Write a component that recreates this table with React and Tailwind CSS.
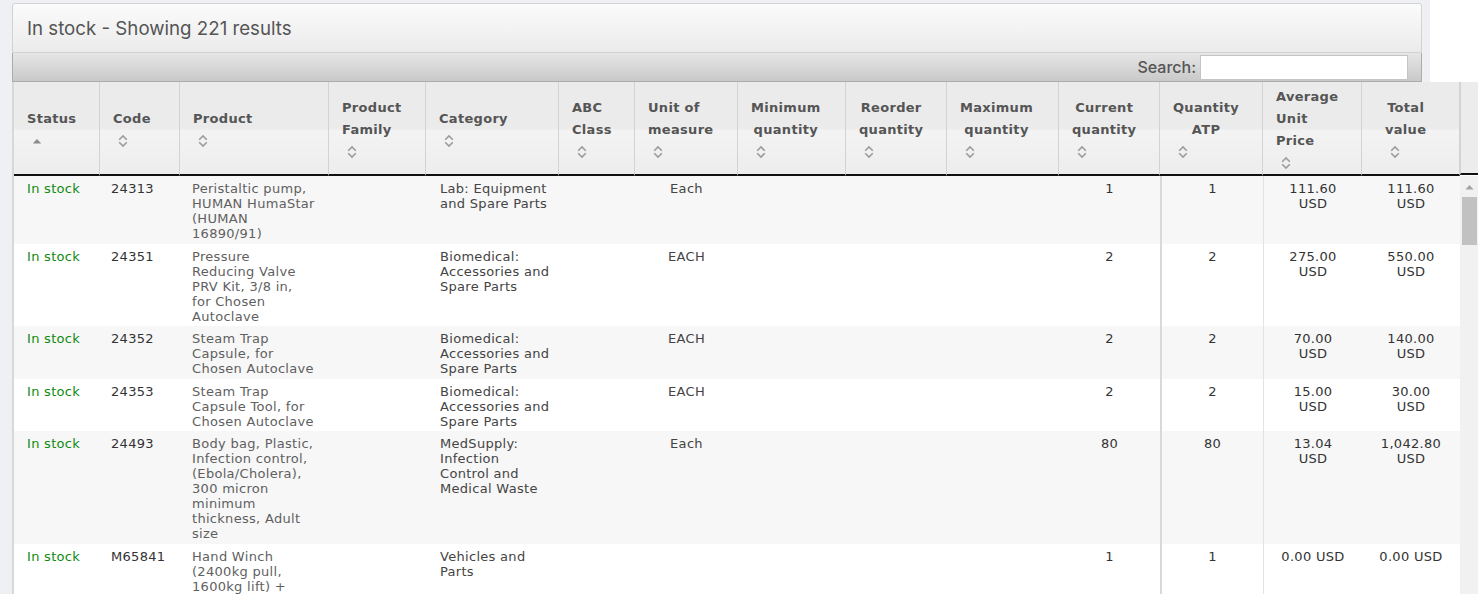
import React from "react";

const cols = [
  { key: "status", w: 86, label: ["Status"], sort: "asc" },
  { key: "code", w: 80, label: ["Code"] },
  { key: "product", w: 149, label: ["Product"] },
  { key: "family", w: 97, label: ["Product", "Family"] },
  { key: "category", w: 133, label: ["Category"] },
  { key: "abc", w: 76, label: ["ABC", "Class"] },
  { key: "uom", w: 103, label: ["Unit of", "measure"], body: "center" },
  { key: "min", w: 108, label: ["Minimum", "quantity"], head: "center" },
  { key: "reorder", w: 101, label: ["Reorder", "quantity"], head: "center" },
  { key: "max", w: 112, label: ["Maximum", "quantity"], head: "center" },
  { key: "current", w: 101, label: ["Current", "quantity"], head: "center", body: "center" },
  { key: "atp", w: 103, label: ["Quantity", "ATP"], head: "center", body: "center" },
  { key: "avg", w: 99, label: ["Average", "Unit", "Price"], body: "center" },
  { key: "total", w: 98, label: ["Total", "value"], head: "center", body: "center", pad: true },
];

const bio = ["Biomedical:", "Accessories and", "Spare Parts"];

const rows = [
  {
    code: "24313",
    product: ["Peristaltic pump,", "HUMAN HumaStar", "(HUMAN", "16890/91)"],
    category: ["Lab: Equipment", "and Spare Parts"],
    uom: "Each",
    current: "1",
    atp: "1",
    avg: ["111.60", "USD"],
    total: ["111.60", "USD"],
  },
  {
    code: "24351",
    product: ["Pressure", "Reducing Valve", "PRV Kit, 3/8 in,", "for Chosen", "Autoclave"],
    category: bio,
    uom: "EACH",
    current: "2",
    atp: "2",
    avg: ["275.00", "USD"],
    total: ["550.00", "USD"],
  },
  {
    code: "24352",
    product: ["Steam Trap", "Capsule, for", "Chosen Autoclave"],
    category: bio,
    uom: "EACH",
    current: "2",
    atp: "2",
    avg: ["70.00", "USD"],
    total: ["140.00", "USD"],
  },
  {
    code: "24353",
    product: ["Steam Trap", "Capsule Tool, for", "Chosen Autoclave"],
    category: bio,
    uom: "EACH",
    current: "2",
    atp: "2",
    avg: ["15.00", "USD"],
    total: ["30.00", "USD"],
  },
  {
    code: "24493",
    product: [
      "Body bag, Plastic,",
      "Infection control,",
      "(Ebola/Cholera),",
      "300 micron",
      "minimum",
      "thickness, Adult",
      "size",
    ],
    category: ["MedSupply:", "Infection", "Control and", "Medical Waste"],
    uom: "Each",
    current: "80",
    atp: "80",
    avg: ["13.04", "USD"],
    total: ["1,042.80", "USD"],
  },
  {
    code: "M65841",
    product: ["Hand Winch", "(2400kg pull,", "1600kg lift) +"],
    category: ["Vehicles and", "Parts"],
    uom: "",
    current: "1",
    atp: "1",
    avg: ["0.00 USD"],
    total: ["0.00 USD"],
  },
];

function SortIcon({ dir }) {
  if (dir === "asc") {
    return (
      <svg width="10" height="14" viewBox="0 0 10 14" className="block">
        <path d="M0.8 9.5 L5 5 L9.2 9.5 Z" fill="#8c8c8c" />
      </svg>
    );
  }
  return (
    <svg width="10" height="14" viewBox="0 0 10 14" className="block">
      <path d="M1.2 5.8 L5 2 L8.8 5.8" fill="none" stroke="#9c9c9c" strokeWidth="1.6" />
      <path d="M1.2 8.2 L5 12 L8.8 8.2" fill="none" stroke="#9c9c9c" strokeWidth="1.6" />
    </svg>
  );
}

function Lines({ value }) {
  if (!value) return null;
  const list = Array.isArray(value) ? value : [value];
  return list.map((l, i) => (
    <div key={i} className="whitespace-nowrap">
      {l}
    </div>
  ));
}

function ColGroup() {
  return (
    <colgroup>
      {cols.map((c) => (
        <col key={c.key} style={{ width: c.w }} />
      ))}
    </colgroup>
  );
}

export default function App() {
  return (
    <div
      className="relative h-[594px] w-[1478px] overflow-hidden bg-white"
      style={{ fontFamily: '"DejaVu Sans", Verdana, sans-serif' }}
    >
      <div className="h-full w-[1430px] bg-[#eff0f4] pl-[12px] pr-[8px] pt-[3px]">
        {/* title panel */}
        <div
          className="flex h-[50px] items-center rounded-t-[3px] border border-[#d2d2d2] bg-[linear-gradient(to_bottom,#fbfbfb,#ebebeb)] pl-[14px] pt-[2px] text-[18.7px] text-[#555]"
          style={{ fontFamily: "Inter, sans-serif" }}
        >
          In stock - Showing 221 results
        </div>

        {/* toolbar */}
        <div className="flex h-[29px] items-center justify-end gap-[4px] border border-t-0 border-[#acacac] bg-[linear-gradient(to_bottom,#e6e6e6,#c9c9c9)] pr-[13px]">
          <span
            className="text-[16px] font-medium text-[#555]"
            style={{ fontFamily: "Inter, sans-serif" }}
          >
            Search:
          </span>
          <input
            type="text"
            className="h-[25px] w-[208px] border border-[#c4c4c4] bg-white outline-none"
          />
        </div>

        {/* table */}
        <div className="w-[1466px]">
          <div className="flex">
            <div className="w-[1448px] border-l-2 border-[#d8d8d8]">
              <table className="w-[1446px] table-fixed border-separate border-spacing-0">
                <ColGroup />
                <thead>
                  <tr className="h-[93px] bg-[linear-gradient(to_bottom,#ebebeb_0%,#ebebeb_49%,#f3f3f3_52%,#ededed_100%)]">
                    {cols.map((c) => (
                      <th
                        key={c.key}
                        className={`border-b-2 border-r border-b-[#111] border-r-[#d3d3d3] pt-[4px] align-middle text-left text-[13px] font-bold leading-[22px] tracking-[0.3px] text-[#555] ${
                          c.pad ? "pl-[23px]" : "pl-[13px]"
                        }`}
                      >
                        <div className="inline-block align-top">
                          <div className={c.head === "center" ? "text-center" : "text-left"}>
                            <Lines value={c.label} />
                          </div>
                          <div className="flex h-[22px] items-center pl-[5px]">
                            <SortIcon dir={c.sort} />
                          </div>
                        </div>
                      </th>
                    ))}
                  </tr>
                </thead>
              </table>
            </div>
            <div className="h-[93px] w-[18px] border-b-2 border-l border-b-[#111] border-l-[#d3d3d3] bg-[#ececec]" />
          </div>

          <div className="flex">
            <div className="w-[1448px] border-l-2 border-[#d8d8d8]">
              <table className="w-[1446px] table-fixed border-separate border-spacing-0">
                <ColGroup />
                <tbody>
                  {rows.map((r, i) => (
                    <tr key={r.code} className={i % 2 === 0 ? "bg-[#f7f7f7]" : "bg-white"}>
                      {cols.map((c) => {
                        let v = r[c.key];
                        if (c.key === "status") v = "In stock";
                        let color = "text-[#333]";
                        if (c.key === "status") color = "text-[#108a10]";
                        if (c.key === "product") color = "text-[#5f5f5f]";
                        if (c.key === "category" || c.key === "uom") color = "text-[#444]";
                        let border = "";
                        if (c.key === "atp") border = "border-l-2 border-l-[#d6d9de]";
                        if (c.key === "avg") border = "border-l border-l-[#e1e3e7]";
                        let pl = "pl-[12px]";
                        if (c.key === "status") pl = "pl-[13px]";
                        if (c.key === "code") pl = "pl-[11px]";
                        if (c.key === "category") pl = "pl-[14px]";
                        return (
                          <td
                            key={c.key}
                            className={`pr-[12px] pt-[5px] pb-[2.5px] align-top text-[13px] leading-[15px] tracking-[0.3px] ${pl} ${color} ${border} ${
                              c.body === "center" ? "text-center" : "text-left"
                            }`}
                          >
                            <Lines value={v} />
                          </td>
                        );
                      })}
                    </tr>
                  ))}
                </tbody>
              </table>
            </div>
            {/* scrollbar */}
            <div className="relative w-[18px] bg-[#f1f1f1]">
              <div className="flex h-[21px] items-center justify-center">
                <svg width="9" height="6" viewBox="0 0 9 6">
                  <path d="M0.5 5.5 L4.5 1 L8.5 5.5 Z" fill="#a3a3a3" />
                </svg>
              </div>
              <div className="ml-[2px] h-[48px] w-[15px] bg-[#c1c1c1]" />
            </div>
          </div>
        </div>
      </div>
    </div>
  );
}
